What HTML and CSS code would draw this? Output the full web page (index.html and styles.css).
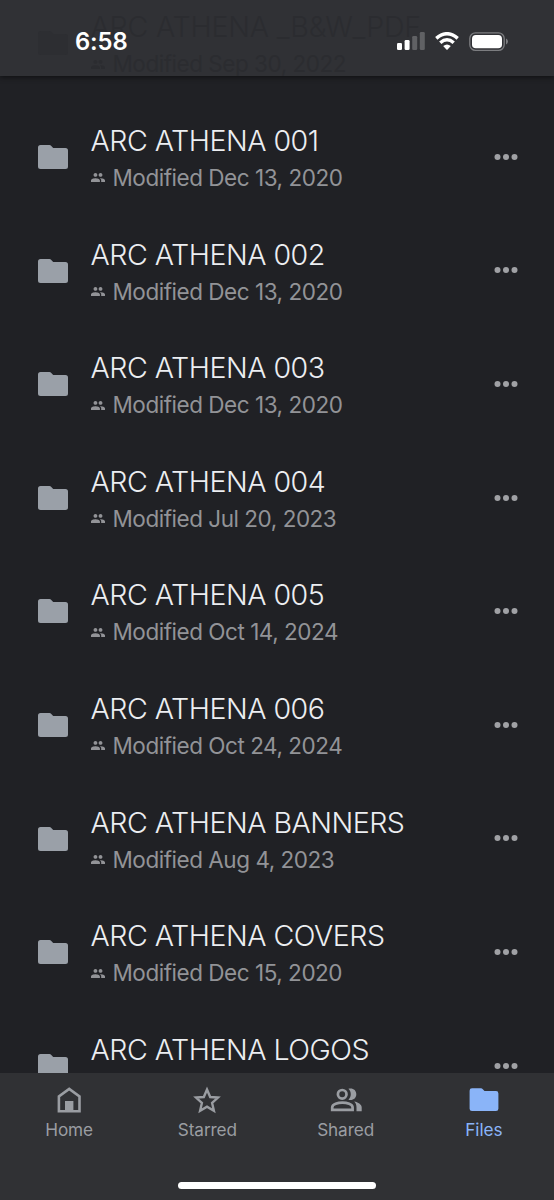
FILE: index.html
```
<!DOCTYPE html>
<html lang="en">
<head>
<meta charset="utf-8">
<title>Files</title>
<link rel="stylesheet" href="styles.css">
</head>
<body>
<svg width="0" height="0" class="defs">
  <symbol id="folder" viewBox="0 0 30 24"><path d="M2.5 0H11.5Q12.5 0 13.3 .9L15.2 3H27.5Q30 3 30 5.5V21.5Q30 24 27.5 24H2.5Q0 24 0 21.5V2.5Q0 0 2.5 0Z"/></symbol>
  <symbol id="people" viewBox="1 5 22 14"><path d="M16 11c1.66 0 2.99-1.34 2.99-3S17.66 5 16 5s-3 1.34-3 3 1.34 3 3 3zm-8 0c1.66 0 2.99-1.34 2.99-3S9.66 5 8 5 5 6.340 5 8s1.340 3 3 3zm0 2c-2.330 0-7 1.170-7 3.500V19h14v-2.500c0-2.330-4.670-3.500-7-3.500zm8 0c-.290 0-.620.020-.970.050 1.160.840 1.970 1.970 1.970 3.450V19h6v-2.500c0-2.330-4.670-3.500-7-3.500z"/></symbol>
  <symbol id="more" viewBox="0 0 24 6"><circle cx="3.500" cy="3" r="3"/><circle cx="12" cy="3" r="3"/><circle cx="20.500" cy="3" r="3"/></symbol>
</svg>
<div class="screen">
  <header class="topbar">
    <div class="row behind">
      <svg class="folder"><use href="#folder"/></svg>
      <div class="info"><div class="title">ARC ATHENA _B&amp;W_PDF</div><div class="meta"><svg class="people"><use href="#people"/></svg><span>Modified Sep 30, 2022</span></div></div>
    </div>
    <div class="status">
      <span class="time">6:58</span>
      <svg class="signal" viewBox="0 0 28 18"><g fill="#fff"><rect x="0" y="11" width="5" height="7" rx="1.300"/><rect x="7.600" y="8" width="5" height="10" rx="1.300"/></g><g fill="#606164"><rect x="15.200" y="4" width="5" height="14" rx="1.300"/><rect x="22.800" y="0" width="5" height="18" rx="1.300"/></g></svg>
      <svg class="wifi" viewBox="0 0 24 18"><g fill="none" stroke="#fff" stroke-width="3.500"><path d="M1.300 6.300Q12-2.800 22.700 6.300"/><path d="M5.300 10.700Q12 4.800 18.700 10.700"/></g><path d="M8.200 14Q12 10.800 15.800 14L12.600 17.500Q12 18 11.400 17.500Z" fill="#fff"/></svg>
      <svg class="battery" viewBox="0 0 40 20"><rect x=".8" y=".8" width="34.400" height="17.600" rx="5.700" fill="none" stroke="#7c7d80" stroke-width="1.300"/><rect x="3" y="3" width="30" height="13.200" rx="3.800" fill="#fff"/><path d="M37 6.600Q39 7.600 39 9.600T37 12.600Z" fill="#7c7d80"/></svg>
    </div>
  </header>
  <main class="list">
    <div class="row"><svg class="folder"><use href="#folder"/></svg><div class="info"><div class="title">ARC ATHENA 001</div><div class="meta"><svg class="people"><use href="#people"/></svg><span>Modified Dec 13, 2020</span></div></div><svg class="more"><use href="#more"/></svg></div>
    <div class="row"><svg class="folder"><use href="#folder"/></svg><div class="info"><div class="title">ARC ATHENA 002</div><div class="meta"><svg class="people"><use href="#people"/></svg><span>Modified Dec 13, 2020</span></div></div><svg class="more"><use href="#more"/></svg></div>
    <div class="row"><svg class="folder"><use href="#folder"/></svg><div class="info"><div class="title">ARC ATHENA 003</div><div class="meta"><svg class="people"><use href="#people"/></svg><span>Modified Dec 13, 2020</span></div></div><svg class="more"><use href="#more"/></svg></div>
    <div class="row"><svg class="folder"><use href="#folder"/></svg><div class="info"><div class="title">ARC ATHENA 004</div><div class="meta"><svg class="people"><use href="#people"/></svg><span>Modified Jul 20, 2023</span></div></div><svg class="more"><use href="#more"/></svg></div>
    <div class="row"><svg class="folder"><use href="#folder"/></svg><div class="info"><div class="title">ARC ATHENA 005</div><div class="meta"><svg class="people"><use href="#people"/></svg><span>Modified Oct 14, 2024</span></div></div><svg class="more"><use href="#more"/></svg></div>
    <div class="row"><svg class="folder"><use href="#folder"/></svg><div class="info"><div class="title">ARC ATHENA 006</div><div class="meta"><svg class="people"><use href="#people"/></svg><span>Modified Oct 24, 2024</span></div></div><svg class="more"><use href="#more"/></svg></div>
    <div class="row"><svg class="folder"><use href="#folder"/></svg><div class="info"><div class="title">ARC ATHENA BANNERS</div><div class="meta"><svg class="people"><use href="#people"/></svg><span>Modified Aug 4, 2023</span></div></div><svg class="more"><use href="#more"/></svg></div>
    <div class="row"><svg class="folder"><use href="#folder"/></svg><div class="info"><div class="title">ARC ATHENA COVERS</div><div class="meta"><svg class="people"><use href="#people"/></svg><span>Modified Dec 15, 2020</span></div></div><svg class="more"><use href="#more"/></svg></div>
    <div class="row"><svg class="folder"><use href="#folder"/></svg><div class="info"><div class="title">ARC ATHENA LOGOS</div></div><svg class="more"><use href="#more"/></svg></div>
  </main>
  <footer class="bottom">
    <nav class="tabs">
      <div class="tab"><svg viewBox="0 0 32 28"><path d="M5.900 25.200V10.500L16.200 2.900L26.500 10.500V25.200Z" fill="none" stroke="currentColor" stroke-width="2.600"/><rect x="12" y="15" width="8.400" height="11" fill="currentColor"/></svg><span>Home</span></div>
      <div class="tab"><svg viewBox="0 0 32 28"><path d="M16 3.500L19.200 11L27 11.600L21.100 16.900L22.900 24.700L16 20.600L9.100 24.700L10.900 16.900L5 11.600L12.800 11Z" fill="none" stroke="currentColor" stroke-width="2.400"/></svg><span>Starred</span></div>
      <div class="tab"><svg viewBox="0 0 32 28"><g fill="none" stroke="currentColor" stroke-width="2.700"><circle cx="12.200" cy="8.300" r="4.300"/><path d="M2.200 23.900V21.400C2.200 18.200 8 16.600 12.400 16.600S22.600 18.200 22.600 21.400V23.900Z"/></g><path d="M18.400 2.800C23 1.700 26.300 4.300 26.300 8.300S23 14.900 18.400 13.800C21.600 10.800 21.600 5.800 18.400 2.800ZM24.200 15.500C28 16.300 31.700 18.300 31.700 21.500V25.200H26.500V21.300C26.500 19 25.800 17 24.200 15.500Z" fill="currentColor"/></svg><span>Shared</span></div>
      <div class="tab active"><svg viewBox="0 0 32 28"><path d="M4 2.300H13Q14 2.300 14.800 3.200L16.500 5.100H28Q30.400 5.100 30.400 7.500V22.700Q30.400 25.100 28 25.100H4Q1.600 25.100 1.600 22.700V4.700Q1.600 2.300 4 2.300Z" fill="currentColor"/></svg><span>Files</span></div>
    </nav>
    <div class="home-indicator"></div>
  </footer>
</div>
</body>
</html>
```
FILE: styles.css
```
* { box-sizing: border-box; }
body { margin: 0; background: #202125; font-family: Inter, "Liberation Sans", sans-serif; }
.defs { display: block; }
svg { display: block; flex: none; }
.screen { width: 554px; height: 1200px; display: flex; flex-direction: column; overflow: hidden; }
.topbar { height: 76px; flex: none; display: grid; background: #303135; box-shadow: 0 1px 5px #0e0f11; z-index: 1; }
.topbar > * { grid-area: 1 / 1; }
.list { flex: 1; min-height: 0; overflow: hidden; padding-top: 24.300px; color: #9aa0a6; }
.row { height: 113.600px; display: flex; align-items: flex-start; padding: 0 36px 0 38px; }
.folder { width: 30px; height: 24px; margin-top: 44.700px; fill: #9aa0a8; }
.info { flex: 1; margin-left: 22.500px; padding-top: 22.700px; white-space: nowrap; }
.title { height: 36px; line-height: 36px; font-size: 28.600px; font-weight: 350; letter-spacing: -0.500px; color: #eceef1; }
.meta { display: flex; align-items: center; gap: 8px; height: 38px; font-size: 22.500px; line-height: 38px; letter-spacing: -0.470px; color: #929397; }
.people { width: 14px; height: 9px; fill: currentColor; }
.more { width: 24px; height: 6px; margin-top: 53.500px; fill: #a0a1a5; }
.behind { margin-top: -13.500px; height: 89.500px; overflow: hidden; color: #2b2c30; }
.behind .title, .behind .meta { color: inherit; }
.behind .title { letter-spacing: -0.200px; }
.behind .folder { fill: #2d2e32; }
.status { display: flex; align-items: flex-start; color: #fff; padding: 32px 0 0 75px; z-index: 1; }
.time { width: 322px; font-size: 23.800px; line-height: 20px; font-weight: 600; letter-spacing: -0.100px; }
.signal { width: 28px; height: 18px; }
.wifi { width: 24px; height: 18px; margin-left: 10px; }
.battery { width: 40px; height: 20px; margin-left: 10px; }
.bottom { height: 127px; flex: none; background: #303134; display: flex; flex-direction: column; align-items: center; }
.tabs { width: 100%; height: 109px; padding-right: 1px; display: flex; }
.tab { flex: 1; display: flex; flex-direction: column; align-items: center; padding-top: 13px; color: #9a9da2; }
.tab svg { width: 32px; height: 28px; }
.tab span { margin-top: 5px; font-size: 17.200px; line-height: 21px; letter-spacing: -0.100px; }
.tab.active { color: #8ab4f8; }
.home-indicator { width: 198px; height: 7px; border-radius: 4px; background: #fff; }
```
